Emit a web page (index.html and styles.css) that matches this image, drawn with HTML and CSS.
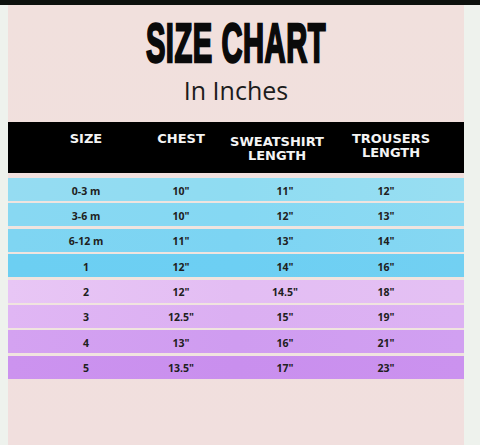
FILE: index.html
```html
<!DOCTYPE html>
<html>
<head>
<meta charset="utf-8">
<link rel="stylesheet" href="styles.css">
</head>
<body>
<div class="topbar"></div>
<div class="panel">
  <div class="title"><span>SIZE CHART</span></div>
  <div class="subtitle">In Inches</div>
  <div class="head">
    <div>SIZE</div>
    <div>CHEST</div>
    <div class="low">SWEATSHIRT<br>LENGTH</div>
    <div>TROUSERS<br>LENGTH</div>
  </div>
  <div class="rows">
    <div class="row b1"><div>0-3 m</div><div>10"</div><div>11"</div><div>12"</div></div>
    <div class="row b2"><div>3-6 m</div><div>10"</div><div>12"</div><div>13"</div></div>
    <div class="row b3"><div>6-12 m</div><div>11"</div><div>13"</div><div>14"</div></div>
    <div class="row b4"><div>1</div><div>12"</div><div>14"</div><div>16"</div></div>
    <div class="row p1"><div>2</div><div>12"</div><div>14.5"</div><div>18"</div></div>
    <div class="row p2"><div>3</div><div>12.5"</div><div>15"</div><div>19"</div></div>
    <div class="row p3"><div>4</div><div>13"</div><div>16"</div><div>21"</div></div>
    <div class="row p4"><div>5</div><div>13.5"</div><div>17"</div><div>23"</div></div>
  </div>
</div>
</body>
</html>
```
FILE: styles.css
```css
html, body {
  margin: 0;
  padding: 0;
}
body {
  width: 480px;
  height: 445px;
  overflow: hidden;
  background: #eef2ed;
}
.topbar {
  height: 5px;
  background: #0d110d;
}
.panel {
  margin-left: 8px;
  width: 456px;
  height: 440px;
  padding-top: 11px;
  box-sizing: border-box;
  background: linear-gradient(#f1e0dd, #f1dfde);
}
.title {
  height: 54px;
  text-align: center;
}
.title span {
  display: inline-block;
  font-family: "Liberation Sans Narrow", "Liberation Sans", sans-serif;
  font-weight: 700;
  font-size: 55px;
  line-height: 54px;
  color: #0a0a0a;
  transform: scaleX(0.53);
  letter-spacing: 1px;
  -webkit-text-stroke: 2.4px #0a0a0a;
}
.subtitle {
  margin-top: 5px;
  text-align: center;
  font-family: "Open Sans", sans-serif;
  font-size: 25px;
  line-height: 30px;
  color: #1c1c1c;
}
.head {
  margin-top: 17px;
  height: 51px;
  box-sizing: border-box;
  padding: 10px 0 0 30px;
  background: #000;
  display: grid;
  grid-template-columns: 96px 94px 98px 130px;
  font-family: "DejaVu Sans", sans-serif;
  font-weight: 700;
  font-size: 13px;
  line-height: 14px;
  color: #f4f4f4;
  text-align: center;
}
.head .low {
  padding-top: 3px;
}
.rows {
  margin-top: 5px;
  display: flex;
  flex-direction: column;
  gap: 2.4px;
  background: #f0e4df;
}
.row {
  height: 23px;
  box-sizing: border-box;
  padding: 2px 0 0 30px;
  display: grid;
  grid-template-columns: 96px 94px 114px 88px;
  align-items: center;
  text-align: center;
  font-family: "Open Sans", sans-serif;
  font-weight: 700;
  font-size: 10.5px;
  color: #202020;
}
.b1 { background: linear-gradient(90deg, #95dcf2, #8fdcf2 50%, #98def2); }
.b2 { background: linear-gradient(90deg, #88d8f2, #85d8f3 50%, #8ddaf2); }
.b3 { background: linear-gradient(90deg, #7fd5f2, #7cd4f3 50%, #86d7f2); }
.b4 { background: linear-gradient(90deg, #6ccff2, #6dcff3 50%, #72d0f2); }
.p1 { background: linear-gradient(90deg, #e8c6f5, #e3bdf3 50%, #e4c0f3); }
.p2 { background: linear-gradient(90deg, #e0b6f4, #dbaff2 50%, #dcb2f3); }
.p3 { background: linear-gradient(90deg, #d4a2f1, #cf9cf0 50%, #d1a0f1); }
.p4 { background: linear-gradient(90deg, #cc93ef, #c98fee 50%, #cb92ef); }
```
